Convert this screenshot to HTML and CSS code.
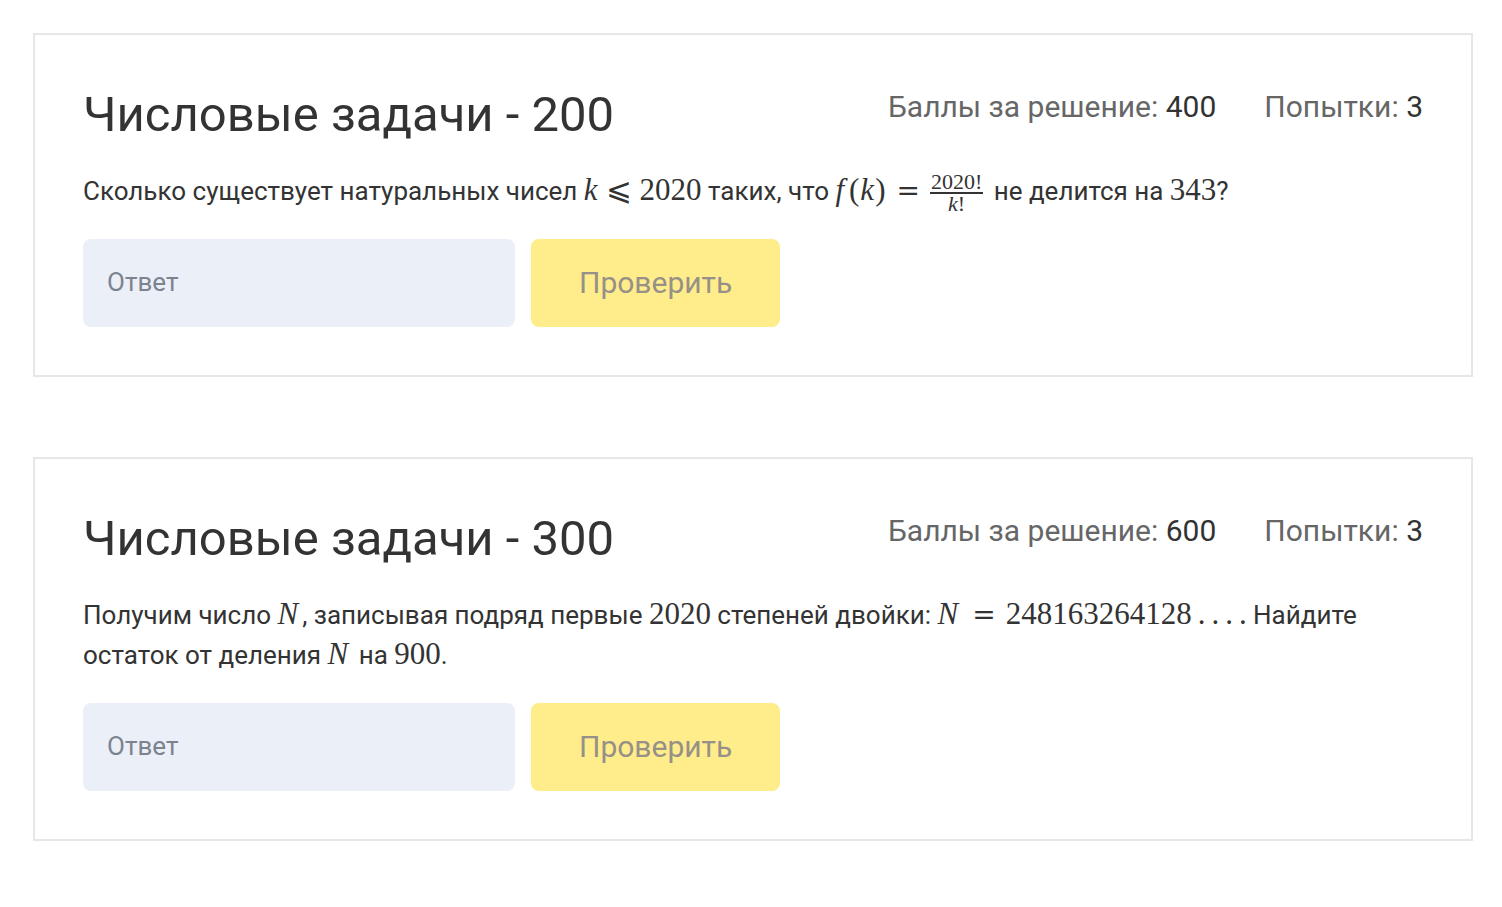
FILE: index.html
```html
<!DOCTYPE html>
<html lang="ru">
<head>
<meta charset="utf-8">
<meta name="viewport" content="width=device-width, initial-scale=1">
<title>Числовые задачи</title>
<link rel="stylesheet" href="styles.css">
</head>
<body>
<main class="tasks">
  <section class="task">
    <header class="task-head">
      <h2 class="task-title">Числовые задачи - 200</h2>
      <div class="task-meta">
        <span>Баллы за решение: <span class="value">400</span></span>
        <span>Попытки: <span class="value">3</span></span>
      </div>
    </header>
    <p class="task-text">Сколько существует натуральных чисел <span class="math"><i>k</i><span class="rel">⩽</span>2020</span> таких, что <span class="math"><i class="fn">f</i><span class="paren">(</span><i>k</i><span class="paren">)</span><span class="rel equals">=</span><span class="frac"><span class="num">2020!</span><span class="den"><i>k</i>!</span></span></span> не делится на <span class="math">343</span>?</p>
    <form class="answer">
      <input class="answer-input" type="text" placeholder="Ответ" aria-label="Ответ">
      <button class="answer-button" type="button">Проверить</button>
    </form>
  </section>
  <section class="task">
    <header class="task-head">
      <h2 class="task-title">Числовые задачи - 300</h2>
      <div class="task-meta">
        <span>Баллы за решение: <span class="value">600</span></span>
        <span>Попытки: <span class="value">3</span></span>
      </div>
    </header>
    <p class="task-text">Получим число <span class="math"><i class="var">N</i></span>, записывая подряд первые <span class="math">2020</span> степеней двойки: <span class="math"><i class="var">N</i><span class="rel equals">=</span>248163264128<span class="dots"><span>.</span><span>.</span><span>.</span><span>.</span></span></span> Найдите остаток от деления <span class="math"><i class="var">N</i></span> на <span class="math">900</span>.</p>
    <form class="answer">
      <input class="answer-input" type="text" placeholder="Ответ" aria-label="Ответ">
      <button class="answer-button" type="button">Проверить</button>
    </form>
  </section>
</main>
</body>
</html>
```
FILE: styles.css
```css
* {
  box-sizing: border-box;
}

body {
  margin: 0;
  background: #fff;
  color: #333;
  font-family: Roboto, "Liberation Sans", sans-serif;
}

.tasks {
  display: flex;
  flex-direction: column;
  gap: 80px;
  padding: 33px 29px 64px 33px;
}

.task {
  padding: 48px;
  border: 2px solid #e7e7e7;
}

.task-head {
  display: flex;
  justify-content: space-between;
  align-items: flex-start;
  margin-bottom: 24px;
}

.task-title {
  margin: 0;
  font-size: 49px;
  line-height: 64px;
  font-weight: 400;
}

.task-meta {
  display: flex;
  gap: 48px;
  color: #666;
  font-size: 30px;
  line-height: 48px;
}

.value {
  color: #333;
}

.task-text {
  margin: 0 0 28px;
  font-size: 26px;
  line-height: 40px;
}

.math {
  font-family: "Liberation Serif", serif;
  font-size: 31px;
  line-height: 1;
  white-space: nowrap;
}

.rel {
  margin: 0 8px;
}

.equals {
  margin: 0 10px;
  font-family: "DejaVu Serif", serif;
  font-size: 28px;
}

.fn {
  margin-right: 4px;
}

.paren {
  margin: 0 1px;
}

.var {
  margin-right: 4px;
}

.frac {
  display: inline-flex;
  flex-direction: column;
  margin: -8px 4px -8px 0;
  vertical-align: middle;
  font-size: 22px;
  line-height: 20px;
  text-align: center;
}

.num {
  padding: 0 1px;
  border-bottom: 2px solid #333;
}

.dots {
  display: inline-flex;
  gap: 6px;
  margin-left: 6px;
}

.answer {
  display: flex;
  gap: 16px;
}

.answer-input,
.answer-button {
  height: 88px;
  border: 0;
  border-radius: 8px;
  font-family: inherit;
}

.answer-input {
  width: 432px;
  padding: 0 24px 2px;
  background: #ebeff7;
  color: #333;
  font-size: 26px;
}

.answer-input::placeholder {
  color: #7d828f;
  opacity: 1;
}

.answer-button {
  padding: 0 48px 2px;
  background: #ffec8b;
  color: #969088;
  font-size: 30px;
}
```
